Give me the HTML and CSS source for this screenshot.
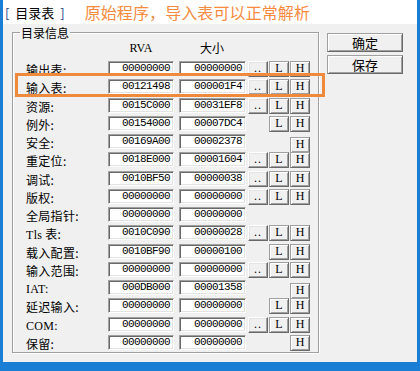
FILE: index.html
```html
<!DOCTYPE html>
<html>
  <head>
    <meta charset="utf-8">
    <link rel="stylesheet" href="styles.css">
    <title>目录表</title>
  </head>
  <body>
    <div class="window">
      <div class="titlebar">
        <span class="caption"><span class="br">[</span> 目录表 <span class="br">]</span></span>
        <span class="note">原始程序，导入表可以正常解析</span>
      </div>
      <div class="client">
        <div class="group">
          <span class="legend">目录信息</span>
          <div class="row head">
            <span></span><span class="hd latin">RVA</span><span class="hd">大小</span>
          </div>
          <div class="row">
            <span class="lbl">输出表:</span><span class="edit">00000000</span><span class="edit">00000000</span>
            <span class="btn dots">..</span><span class="btn l">L</span><span class="btn h">H</span>
          </div>
          <div class="row">
            <span class="lbl">输入表:</span><span class="edit">00121498</span><span class="edit">000001F4</span>
            <span class="btn dots">..</span><span class="btn l">L</span><span class="btn h">H</span>
          </div>
          <div class="row">
            <span class="lbl">资源:</span><span class="edit">0015C000</span><span class="edit">00031EF8</span>
            <span class="btn dots">..</span><span class="btn l">L</span><span class="btn h">H</span>
          </div>
          <div class="row">
            <span class="lbl">例外:</span><span class="edit">00154000</span><span class="edit">00007DC4</span>
            <span class="btn l">L</span><span class="btn h">H</span>
          </div>
          <div class="row">
            <span class="lbl">安全:</span><span class="edit">00169A00</span><span class="edit">00002378</span>
            <span class="btn h low">H</span>
          </div>
          <div class="row">
            <span class="lbl">重定位:</span><span class="edit">0018E000</span><span class="edit">00001604</span>
            <span class="btn dots">..</span><span class="btn l">L</span><span class="btn h">H</span>
          </div>
          <div class="row">
            <span class="lbl">调试:</span><span class="edit">0010BF50</span><span class="edit">00000038</span>
            <span class="btn dots">..</span><span class="btn l">L</span><span class="btn h">H</span>
          </div>
          <div class="row">
            <span class="lbl">版权:</span><span class="edit">00000000</span><span class="edit">00000000</span>
            <span class="btn dots">..</span><span class="btn l">L</span><span class="btn h">H</span>
          </div>
          <div class="row">
            <span class="lbl">全局指针:</span><span class="edit">00000000</span><span class="edit">00000000</span>
          </div>
          <div class="row">
            <span class="lbl"><span class="latin">Tls</span> 表:</span><span class="edit">0010C090</span><span class="edit">00000028</span>
            <span class="btn dots">..</span><span class="btn l">L</span><span class="btn h">H</span>
          </div>
          <div class="row">
            <span class="lbl">载入配置:</span><span class="edit">0010BF90</span><span class="edit">00000100</span>
            <span class="btn l">L</span><span class="btn h">H</span>
          </div>
          <div class="row">
            <span class="lbl">输入范围:</span><span class="edit">00000000</span><span class="edit">00000000</span>
            <span class="btn dots">..</span><span class="btn l">L</span><span class="btn h">H</span>
          </div>
          <div class="row">
            <span class="lbl latin">IAT:</span><span class="edit">000DB000</span><span class="edit">00001358</span>
            <span class="btn h low">H</span>
          </div>
          <div class="row">
            <span class="lbl">延迟输入:</span><span class="edit">00000000</span><span class="edit">00000000</span>
            <span class="btn l">L</span><span class="btn h">H</span>
          </div>
          <div class="row">
            <span class="lbl latin">COM:</span><span class="edit">00000000</span><span class="edit">00000000</span>
            <span class="btn dots">..</span><span class="btn l">L</span><span class="btn h">H</span>
          </div>
          <div class="row">
            <span class="lbl">保留:</span><span class="edit">00000000</span><span class="edit">00000000</span>
            <span class="btn h">H</span>
          </div>
        </div>
        <div class="actions">
          <button class="push">确定</button>
          <button class="push">保存</button>
        </div>
      </div>
      <div class="mark"></div>
    </div>
  </body>
</html>
```

FILE: styles.css
```css
body {
  margin: 0;
  font-family: "Noto Sans CJK SC", sans-serif;
}
.window {
  position: relative;
  width: 414px;
  height: 362px;
  border-left: 3px solid #1a7fd4;
  border-right: 3px solid #1a7fd4;
  border-bottom: 9px solid #1a7fd4;
  background: #f0f0f0;
}
.titlebar {
  height: 24px;
  background: #fff;
  display: flex;
  align-items: center;
}
.caption {
  font-size: 13px;
  margin-left: 2px;
  word-spacing: 3px;
  color: #000;
}
.caption .br {
  color: #1b3f82;
}
.note {
  margin-left: 20px;
  font-size: 16px;
  color: #f68b3e;
  letter-spacing: 0.1px;
}
.client {
  display: flex;
  align-items: flex-start;
}
.group {
  position: relative;
  margin: 8px 0 0 9px;
  width: 307px;
  height: 321px;
  border: 1px solid #a0a0a0;
  box-shadow: inset 1px 1px #fff, 1px 1px #fff;
  padding: 7px 0 0 13px;
  box-sizing: border-box;
}
.legend {
  position: absolute;
  top: -8px;
  left: 7px;
  padding: 0 1px;
  background: #f0f0f0;
  font-size: 12px;
  line-height: 15px;
}
.row {
  display: grid;
  grid-template-columns: 82px 71px 69px 21px 21px 20px;
  height: 18.25px;
  align-items: start;
}
.row.head {
  height: 21px;
}
.hd {
  width: 66px;
  text-align: center;
  font-size: 12px;
  line-height: 16px;
}
.latin {
  font-family: "Liberation Serif", serif;
}
.lbl {
  grid-column: 1;
  font-size: 12px;
  line-height: 16px;
  padding-top: 1px;
  letter-spacing: 0.3px;
}
.lbl.latin {
  font-size: 12px;
}
.edit {
  width: 66px;
  height: 15px;
  box-sizing: border-box;
  border: 1px solid;
  border-color: #a0a0a0 #fff #fff #a0a0a0;
  box-shadow: inset 1px 1px #696969, inset -1px -1px #e3e3e3;
  background: #fff;
  font-family: "Liberation Mono", monospace;
  font-size: 11px;
  letter-spacing: -0.6px;
  line-height: 13px;
  text-align: right;
  padding-right: 3px;
}
.edit + .edit {
  width: 67px;
}
.btn {
  width: 20px;
  height: 16px;
  box-sizing: border-box;
  border: 1px solid;
  border-color: #fff #696969 #696969 #fff;
  box-shadow: inset -1px -1px #a0a0a0, inset 1px 1px #e3e3e3;
  background: #f0f0f0;
  font-family: "Liberation Serif", serif;
  font-size: 12px;
  line-height: 13px;
  text-align: center;
}
.btn.l, .btn.h {
  border-color: #a0a0a0 #696969 #696969 #a0a0a0;
  box-shadow: inset 1px 1px #fff, inset -1px -1px #a0a0a0;
}
.dots {
  grid-column: 4;
  letter-spacing: 1px;
}
.l {
  grid-column: 5;
}
.h {
  grid-column: 6;
}
.low {
  margin-top: 3px;
}
.actions {
  display: flex;
  flex-direction: column;
  gap: 3px;
  margin: 9px 0 0 8px;
}
.push {
  width: 76px;
  height: 19px;
  padding: 0;
  border: 1px solid;
  border-color: #a0a0a0 #696969 #696969 #a0a0a0;
  box-shadow: inset 1px 1px #fff, inset -1px -1px #a0a0a0;
  background: #f0f0f0;
  font-family: "Noto Sans CJK SC", sans-serif;
  font-size: 13px;
  line-height: 15px;
  color: #000;
}
.mark {
  position: absolute;
  left: 12px;
  top: 73px;
  width: 310px;
  height: 24px;
  box-sizing: border-box;
  border: 3px solid #ef8a3d;
}
```
